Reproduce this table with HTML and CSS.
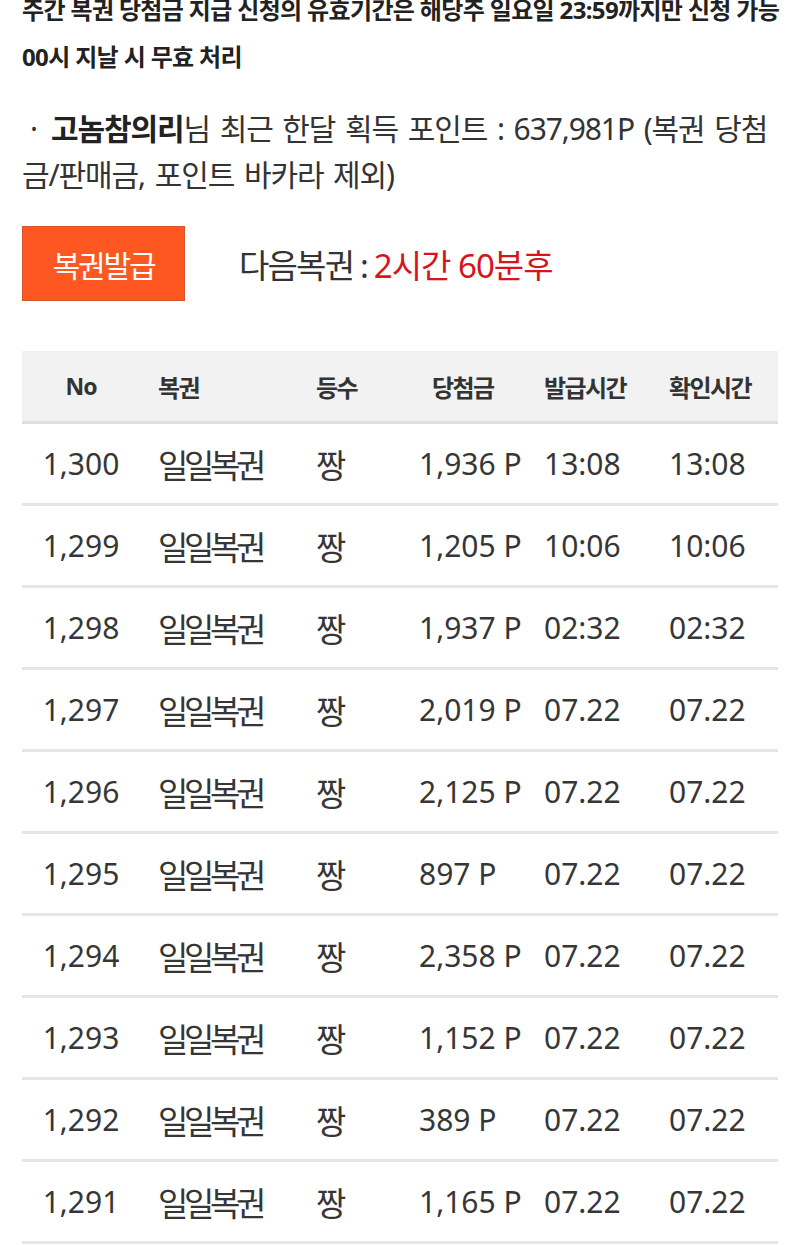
FILE: index.html
```html
<!DOCTYPE html>
<html lang="ko">
<head>
<meta charset="utf-8">
<title>복권</title>
<link rel="stylesheet" href="styles.css">
</head>
<body>
<div class="page">
  <p class="notice">주간 복권 당첨금 지급 신청의 유효기간은 해당주 일요일 23:59까지만 신청 가능<br>00시 지날 시 무효 처리</p>
  <p class="points"><span class="dot">·</span><b>고놈참의리</b>님 최근 한달 획득 포인트 : 637,981P (복권 당첨금/판매금, 포인트 바카라 제외)</p>
  <div class="issue">
    <button class="btn" type="button">복권발급</button>
    <span class="next">다음복권 : <em>2시간 60분후</em></span>
  </div>
  <table class="lotto">
    <colgroup>
      <col class="c1"><col class="c2"><col class="c3"><col class="c4"><col class="c5"><col class="c6">
    </colgroup>
    <thead>
      <tr><th class="no">No</th><th>복권</th><th>등수</th><th class="amt">당첨금</th><th>발급시간</th><th>확인시간</th></tr>
    </thead>
    <tbody>
      <tr><td class="no">1,300</td><td class="ko">일일복권</td><td class="ko">짱</td><td class="amt">1,936 P</td><td>13:08</td><td>13:08</td></tr>
      <tr><td class="no">1,299</td><td class="ko">일일복권</td><td class="ko">짱</td><td class="amt">1,205 P</td><td>10:06</td><td>10:06</td></tr>
      <tr><td class="no">1,298</td><td class="ko">일일복권</td><td class="ko">짱</td><td class="amt">1,937 P</td><td>02:32</td><td>02:32</td></tr>
      <tr><td class="no">1,297</td><td class="ko">일일복권</td><td class="ko">짱</td><td class="amt">2,019 P</td><td>07.22</td><td>07.22</td></tr>
      <tr><td class="no">1,296</td><td class="ko">일일복권</td><td class="ko">짱</td><td class="amt">2,125 P</td><td>07.22</td><td>07.22</td></tr>
      <tr><td class="no">1,295</td><td class="ko">일일복권</td><td class="ko">짱</td><td class="amt">897 P</td><td>07.22</td><td>07.22</td></tr>
      <tr><td class="no">1,294</td><td class="ko">일일복권</td><td class="ko">짱</td><td class="amt">2,358 P</td><td>07.22</td><td>07.22</td></tr>
      <tr><td class="no">1,293</td><td class="ko">일일복권</td><td class="ko">짱</td><td class="amt">1,152 P</td><td>07.22</td><td>07.22</td></tr>
      <tr><td class="no">1,292</td><td class="ko">일일복권</td><td class="ko">짱</td><td class="amt">389 P</td><td>07.22</td><td>07.22</td></tr>
      <tr><td class="no">1,291</td><td class="ko">일일복권</td><td class="ko">짱</td><td class="amt">1,165 P</td><td>07.22</td><td>07.22</td></tr>
    </tbody>
  </table>
</div>
</body>
</html>
```
FILE: styles.css
```css
html, body {
  margin: 0;
  background: #fff;
  overflow: hidden;
}
body {
  font-family: "Noto Sans", "Noto Sans CJK KR", sans-serif;
  color: #333;
}
.page {
  padding: 0 22px;
  overflow: hidden;
}
.notice {
  margin: -14px 0 0;
  font-size: 24px;
  font-weight: 700;
  line-height: 47px;
  color: #222;
  letter-spacing: -0.65px;
  white-space: nowrap;
}
.points {
  margin: 26px 0 0;
  font-size: 30px;
  line-height: 46px;
  color: #333;
  letter-spacing: -1.1px;
  word-spacing: 3px;
}
.points b {
  font-weight: 700;
  color: #222;
}
.dot {
  margin: 0 14px 0 8px;
}
.issue {
  display: flex;
  align-items: center;
  gap: 54px;
  margin-top: 28px;
}
.btn {
  width: 163px;
  height: 75px;
  padding: 0;
  background: #ff5722;
  border: 1px solid #d4542c;
  color: #fff;
  font-family: inherit;
  font-size: 30px;
  letter-spacing: -2.2px;
}
.next {
  font-size: 33px;
  letter-spacing: -1.8px;
  color: #333;
}
.next em {
  font-style: normal;
  color: #d6141c;
  letter-spacing: -1px;
}
.lotto {
  margin-top: 50px;
  width: 756px;
  border-collapse: collapse;
  table-layout: fixed;
}
.c1 { width: 118px; }
.c2 { width: 160px; }
.c3 { width: 100px; }
.c4 { width: 130px; }
.c5 { width: 125px; }
.c6 { width: 123px; }
.lotto th {
  height: 70px;
  padding: 0 0 0 14px;
  background: #f2f2f2;
  border-bottom: 3px solid #dedede;
  font-size: 24px;
  font-weight: 700;
  letter-spacing: -1.6px;
  text-align: left;
  color: #333;
}
.lotto td {
  height: 79px;
  padding: 0 0 0 14px;
  border-bottom: 3px solid #e6e6e6;
  font-size: 30px;
  color: #363636;
  text-align: left;
}
.lotto th:nth-child(2), .lotto td:nth-child(2) { padding-left: 18px; }
.lotto th:nth-child(3), .lotto td:nth-child(3) { padding-left: 16px; }
.lotto th.amt { padding-left: 32px; }
.lotto td.amt { padding-left: 19px; }
.lotto th.no, .lotto td.no {
  padding: 0;
  text-align: center;
  letter-spacing: 0;
}
.lotto th.no {
  font-size: 23px;
  letter-spacing: -1px;
}
.lotto td.ko {
  font-size: 33px;
  letter-spacing: -4.4px;
}
```
